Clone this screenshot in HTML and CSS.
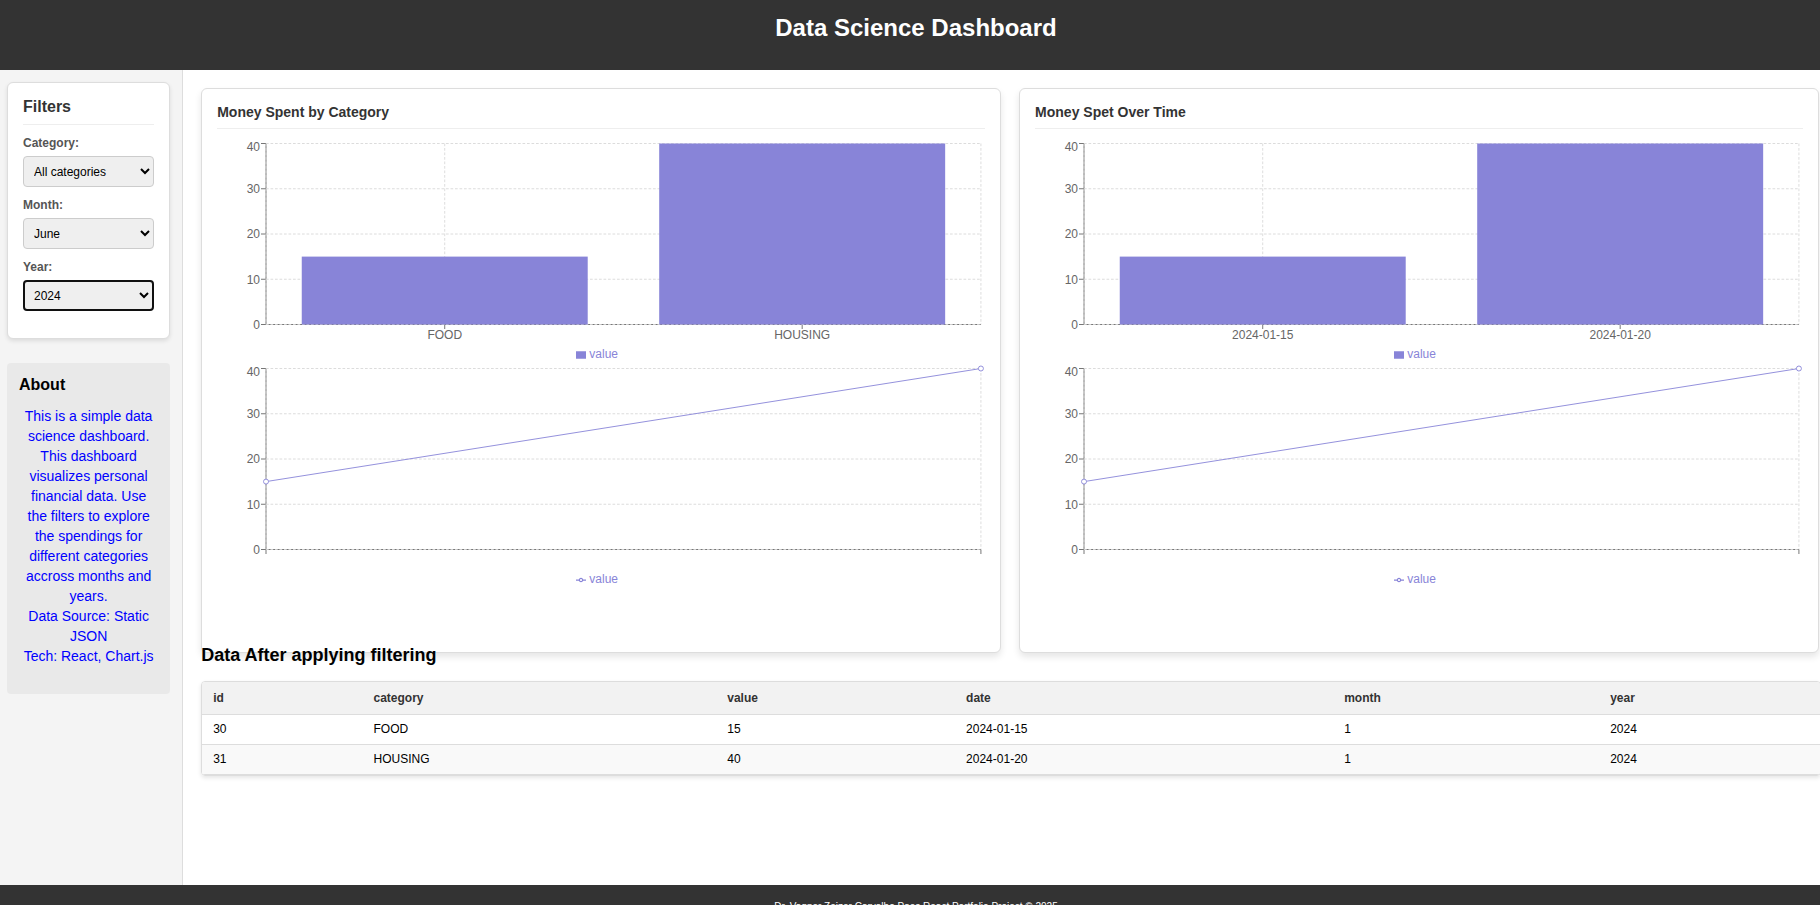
FILE: index.html
```html
<!DOCTYPE html>
<html lang="en">
<head>
<meta charset="utf-8">
<title>Data Science Dashboard</title>
<link rel="stylesheet" href="styles.css">
</head>
<body>
<div class="page">
  <header class="header"><h1>Data Science Dashboard</h1></header>

  <div class="body">
    <aside class="sidebar">
      <form class="filters">
        <h2>Filters</h2>
        <label for="category">Category:</label>
        <select id="category"><option>All categories</option><option>FOOD</option><option>HOUSING</option></select>
        <label for="month">Month:</label>
        <select id="month"><option>June</option><option>January</option></select>
        <label for="year">Year:</label>
        <select id="year" class="active"><option>2024</option><option>2025</option></select>
      </form>
      <section class="about">
        <h2>About</h2>
        <p>This is a simple data science dashboard. This dashboard visualizes personal financial data. Use the filters to explore the spendings for different categories accross months and years.<br>Data Source: Static JSON<br>Tech: React, Chart.js</p>
      </section>
    </aside>

    <main class="main">
      <div class="cards">
        <section class="card">
          <h3>Money Spent by Category</h3>
          <figure class="chart">
            <svg class="plot" role="img" aria-label="Bar chart of value by category">
              <g class="axis">
                <line x1="0" x2="100%" y1="181.5" y2="181.5"/><line x1="0" x2="0" y1="0.5" y2="181.5"/>
                <line x1="-5" x2="0" y1="0.5" y2="0.5"/><line x1="-5" x2="0" y1="45.75" y2="45.75"/><line x1="-5" x2="0" y1="91" y2="91"/><line x1="-5" x2="0" y1="136.25" y2="136.25"/><line x1="-5" x2="0" y1="181.5" y2="181.5"/>
                <line x1="25%" x2="25%" y1="181.5" y2="186"/><line x1="75%" x2="75%" y1="181.5" y2="186"/>
              </g>
              <g class="grid">
                <line x1="0" x2="100%" y1="0.5" y2="0.5"/><line x1="0" x2="100%" y1="45.75" y2="45.75"/><line x1="0" x2="100%" y1="91" y2="91"/><line x1="0" x2="100%" y1="136.25" y2="136.25"/><line x1="0" x2="100%" y1="181.5" y2="181.5"/>
                <line x1="0" x2="0" y1="0.5" y2="181.5"/><line x1="25%" x2="25%" y1="0.5" y2="181.5"/><line x1="75%" x2="75%" y1="0.5" y2="181.5"/><line x1="100%" x2="100%" y1="0.5" y2="181.5"/>
              </g>
              <rect class="bar" x="5%" width="40%" y="113.6" height="67.9"/><rect class="bar" x="55%" width="40%" y="0.5" height="181"/>
              <g class="ylabels"><text x="-6" y="8">40</text><text x="-6" y="50">30</text><text x="-6" y="95">20</text><text x="-6" y="141">10</text><text x="-6" y="186">0</text></g>
              <g class="xlabels"><text x="25%" y="196">FOOD</text><text x="75%" y="196">HOUSING</text></g>
            </svg>
            <figcaption class="legend"><svg viewBox="0 0 32 32" aria-hidden="true"><path class="fill" d="M0,4h32v24h-32z"/></svg>value</figcaption>
          </figure>
          <figure class="chart">
            <svg class="plot" role="img" aria-label="Line chart of value by category">
              <g class="axis">
                <line x1="0" x2="100%" y1="181.5" y2="181.5"/><line x1="0" x2="0" y1="0.5" y2="186"/>
                <line x1="-5" x2="0" y1="0.5" y2="0.5"/><line x1="-5" x2="0" y1="45.75" y2="45.75"/><line x1="-5" x2="0" y1="91" y2="91"/><line x1="-5" x2="0" y1="136.25" y2="136.25"/><line x1="-5" x2="0" y1="181.5" y2="181.5"/>
                <line x1="100%" x2="100%" y1="181.5" y2="186"/>
              </g>
              <g class="grid">
                <line x1="0" x2="100%" y1="0.5" y2="0.5"/><line x1="0" x2="100%" y1="45.75" y2="45.75"/><line x1="0" x2="100%" y1="91" y2="91"/><line x1="0" x2="100%" y1="136.25" y2="136.25"/><line x1="0" x2="100%" y1="181.5" y2="181.5"/>
                <line x1="0" x2="0" y1="0.5" y2="181.5"/><line x1="100%" x2="100%" y1="0.5" y2="181.5"/>
              </g>
              <line class="series" x1="0" x2="100%" y1="113.6" y2="0.5"/>
              <circle class="dot" cx="0" cy="113.6" r="2.5"/><circle class="dot" cx="100%" cy="0.5" r="2.5"/>
              <g class="ylabels"><text x="-6" y="8">40</text><text x="-6" y="50">30</text><text x="-6" y="95">20</text><text x="-6" y="141">10</text><text x="-6" y="186">0</text></g>
            </svg>
            <figcaption class="legend"><svg viewBox="0 0 32 32" aria-hidden="true"><path class="stroke" d="M0,16h10.67A5.33,5.33,0,1,1,21.33,16H32M21.33,16A5.33,5.33,0,1,1,10.67,16"/></svg>value</figcaption>
          </figure>
        </section>

        <section class="card">
          <h3>Money Spet Over Time</h3>
          <figure class="chart">
            <svg class="plot" role="img" aria-label="Bar chart of value by date">
              <g class="axis">
                <line x1="0" x2="100%" y1="181.5" y2="181.5"/><line x1="0" x2="0" y1="0.5" y2="181.5"/>
                <line x1="-5" x2="0" y1="0.5" y2="0.5"/><line x1="-5" x2="0" y1="45.75" y2="45.75"/><line x1="-5" x2="0" y1="91" y2="91"/><line x1="-5" x2="0" y1="136.25" y2="136.25"/><line x1="-5" x2="0" y1="181.5" y2="181.5"/>
                <line x1="25%" x2="25%" y1="181.5" y2="186"/><line x1="75%" x2="75%" y1="181.5" y2="186"/>
              </g>
              <g class="grid">
                <line x1="0" x2="100%" y1="0.5" y2="0.5"/><line x1="0" x2="100%" y1="45.75" y2="45.75"/><line x1="0" x2="100%" y1="91" y2="91"/><line x1="0" x2="100%" y1="136.25" y2="136.25"/><line x1="0" x2="100%" y1="181.5" y2="181.5"/>
                <line x1="0" x2="0" y1="0.5" y2="181.5"/><line x1="25%" x2="25%" y1="0.5" y2="181.5"/><line x1="75%" x2="75%" y1="0.5" y2="181.5"/><line x1="100%" x2="100%" y1="0.5" y2="181.5"/>
              </g>
              <rect class="bar" x="5%" width="40%" y="113.6" height="67.9"/><rect class="bar" x="55%" width="40%" y="0.5" height="181"/>
              <g class="ylabels"><text x="-6" y="8">40</text><text x="-6" y="50">30</text><text x="-6" y="95">20</text><text x="-6" y="141">10</text><text x="-6" y="186">0</text></g>
              <g class="xlabels"><text x="25%" y="196">2024-01-15</text><text x="75%" y="196">2024-01-20</text></g>
            </svg>
            <figcaption class="legend"><svg viewBox="0 0 32 32" aria-hidden="true"><path class="fill" d="M0,4h32v24h-32z"/></svg>value</figcaption>
          </figure>
          <figure class="chart">
            <svg class="plot" role="img" aria-label="Line chart of value by date">
              <g class="axis">
                <line x1="0" x2="100%" y1="181.5" y2="181.5"/><line x1="0" x2="0" y1="0.5" y2="186"/>
                <line x1="-5" x2="0" y1="0.5" y2="0.5"/><line x1="-5" x2="0" y1="45.75" y2="45.75"/><line x1="-5" x2="0" y1="91" y2="91"/><line x1="-5" x2="0" y1="136.25" y2="136.25"/><line x1="-5" x2="0" y1="181.5" y2="181.5"/>
                <line x1="100%" x2="100%" y1="181.5" y2="186"/>
              </g>
              <g class="grid">
                <line x1="0" x2="100%" y1="0.5" y2="0.5"/><line x1="0" x2="100%" y1="45.75" y2="45.75"/><line x1="0" x2="100%" y1="91" y2="91"/><line x1="0" x2="100%" y1="136.25" y2="136.25"/><line x1="0" x2="100%" y1="181.5" y2="181.5"/>
                <line x1="0" x2="0" y1="0.5" y2="181.5"/><line x1="100%" x2="100%" y1="0.5" y2="181.5"/>
              </g>
              <line class="series" x1="0" x2="100%" y1="113.6" y2="0.5"/>
              <circle class="dot" cx="0" cy="113.6" r="2.5"/><circle class="dot" cx="100%" cy="0.5" r="2.5"/>
              <g class="ylabels"><text x="-6" y="8">40</text><text x="-6" y="50">30</text><text x="-6" y="95">20</text><text x="-6" y="141">10</text><text x="-6" y="186">0</text></g>
            </svg>
            <figcaption class="legend"><svg viewBox="0 0 32 32" aria-hidden="true"><path class="stroke" d="M0,16h10.67A5.33,5.33,0,1,1,21.33,16H32M21.33,16A5.33,5.33,0,1,1,10.67,16"/></svg>value</figcaption>
          </figure>
        </section>
      </div>

      <section class="data">
        <h2>Data After applying filtering</h2>
        <table class="table">
          <thead><tr><th>id</th><th>category</th><th>value</th><th>date</th><th>month</th><th>year</th></tr></thead>
          <tbody>
            <tr><td>30</td><td>FOOD</td><td>15</td><td>2024-01-15</td><td>1</td><td>2024</td></tr>
            <tr><td>31</td><td>HOUSING</td><td>40</td><td>2024-01-20</td><td>1</td><td>2024</td></tr>
          </tbody>
        </table>
      </section>
    </main>
  </div>

  <footer class="footer">Dr. Vagner Zeizer Carvalho Paes React Portfolio Project © 2025</footer>
</div>
</body>
</html>
```
FILE: styles.css
```css
* { box-sizing: border-box; }

body {
  margin: 0;
  height: 100vh;
  overflow: hidden;
  background: #fff;
  color: #000;
  font-family: "Liberation Sans", Arial, sans-serif;
  font-size: 14px;
}

h1, h2, h3, p, figure { margin: 0; }

/* The page runs slightly past the right edge of the window. */
.page {
  display: flex;
  flex-direction: column;
  width: calc(100% + 12px);
  min-height: calc(100vh + 20px);
}

.header {
  padding: 14px 18px 28px;
  background: #333;
  color: #fff;
  text-align: center;
}
.header h1 { font-size: 24px; line-height: 28px; }

.body { display: flex; flex: 1; }

.sidebar {
  flex: 0 0 10%;
  padding: 12px 12px 12px 7px;
  background: #f4f4f4;
  border-right: 1px solid #ddd;
}

.filters {
  display: flex;
  flex-direction: column;
  padding: 15px 15px 27px;
  background: #fff;
  border: 1px solid #ddd;
  border-radius: 6px;
  box-shadow: 0 2px 4px rgba(0, 0, 0, 0.1);
}
.filters h2 {
  margin-bottom: 11px;
  padding-bottom: 8px;
  border-bottom: 1px solid #eee;
  color: #333;
  font-size: 16px;
  line-height: 18px;
}
.filters label {
  margin-bottom: 6px;
  color: #555;
  font-size: 12px;
  font-weight: bold;
  line-height: 14px;
}
.filters select {
  height: 31px;
  margin-bottom: 11px;
  padding: 0 6px;
  background: #efefef;
  border: 1px solid #ccc;
  border-radius: 4px;
  color: #000;
  font-family: inherit;
  font-size: 12px;
}
.filters .active { margin-bottom: 0; border: 2px solid #101010; padding: 0 5px; }

.about {
  margin-top: 24px;
  padding: 13px 12px 28px;
  background: #e9e9e9;
  border-radius: 4px;
}
.about h2 { margin-bottom: 12px; font-size: 16px; line-height: 18px; }
.about p { padding: 0 2px; color: blue; line-height: 20px; text-align: center; }

.main { flex: 1; min-width: 0; padding: 18px 11px 0 18px; }

.cards {
  display: grid;
  grid-template-columns: 1fr 1fr;
  gap: 18px;
  padding-right: 2px;
}
.card {
  padding: 15px 15px 59px;
  background: #fff;
  border: 1px solid #ddd;
  border-radius: 6px;
  box-shadow: 0 4px 7px rgba(0, 0, 0, 0.1);
}
.card h3 {
  margin-bottom: 14px;
  padding-bottom: 8px;
  border-bottom: 1px solid #eee;
  color: #333;
  font-size: 14px;
  line-height: 16px;
}

.chart { padding: 0 4px 7px 49px; }
.plot { display: block; width: 100%; height: 182px; overflow: visible; }
.grid line { stroke: #d8d8d8; stroke-width: 0.9; stroke-dasharray: 2.7 1.8; }
.axis line { stroke: #666; stroke-width: 0.9; }
.bar { fill: #8884d8; }
.series { stroke: #8884d8; stroke-width: 0.9; }
.dot { fill: #fff; stroke: #8884d8; stroke-width: 0.9; }
.plot text { fill: #666; font-size: 12px; }
.ylabels { text-anchor: end; }
.xlabels { text-anchor: middle; }

.legend {
  display: flex;
  align-items: center;
  justify-content: center;
  gap: 3px;
  margin-top: 22px;
  padding-right: 53px;
  color: #8884d8;
  font-size: 12px;
  line-height: 14px;
}
.legend svg { width: 10px; height: 10px; margin-top: 2px; }
.legend .fill { fill: #8884d8; }
.legend .stroke { fill: none; stroke: #8884d8; stroke-width: 4; }

/* The section title overlaps the lower edge of the cards. */
.data { position: relative; margin-top: -8px; }
.data h2 { margin-bottom: 16px; font-size: 18px; line-height: 20px; }

.table {
  width: 100%;
  border: 1px solid #ddd;
  border-radius: 4px;
  border-spacing: 0;
  box-shadow: 0 2px 4px rgba(0, 0, 0, 0.1);
  overflow: hidden;
  font-size: 12px;
  text-align: left;
}
.table th {
  padding: 9px 11px;
  background: #f2f2f2;
  border-bottom: 1px solid #ddd;
  color: #333;
  line-height: 14px;
}
.table td {
  padding: 7px 11px 8px;
  border-bottom: 1px solid #ddd;
  line-height: 14px;
}
.table tbody tr:nth-child(even) { background: #f9f9f9; }

.footer {
  height: 40px;
  padding-top: 16px;
  background: #333;
  color: #fff;
  font-size: 10px;
  line-height: 12px;
  text-align: center;
}
```
